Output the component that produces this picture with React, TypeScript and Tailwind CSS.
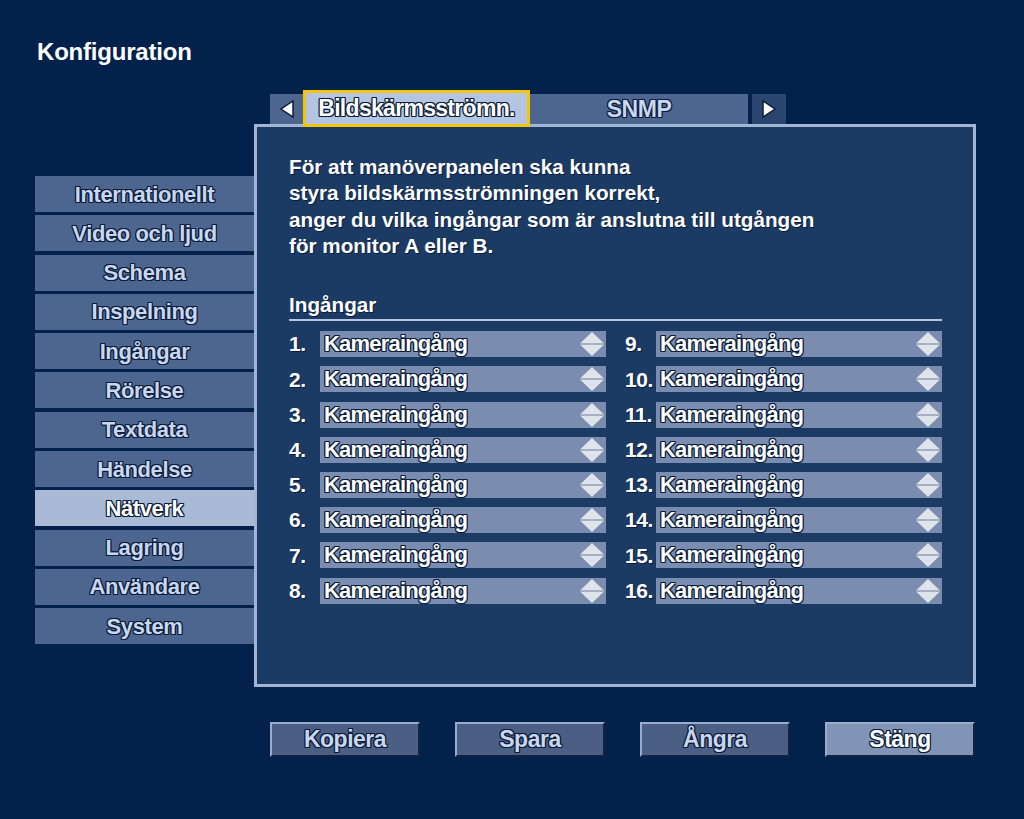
import React from "react";

const outline =
  "[text-shadow:-1px_-1px_0_#0b1b38,1px_-1px_0_#0b1b38,-1px_1px_0_#0b1b38,1px_1px_0_#0b1b38,0_-1px_0_#0b1b38,0_1px_0_#0b1b38,-1px_0_0_#0b1b38,1px_0_0_#0b1b38]";

const menu = [
  "Internationellt",
  "Video och ljud",
  "Schema",
  "Inspelning",
  "Ingångar",
  "Rörelse",
  "Textdata",
  "Händelse",
  "Nätverk",
  "Lagring",
  "Användare",
  "System",
];

const Diamond = () => (
  <svg width="26" height="26" viewBox="0 0 26 26" className="shrink-0">
    <polygon points="13,1 25,12.5 1,12.5" fill="#dfe3ea" />
    <polygon points="1,13.5 25,13.5 13,25" fill="#dfe3ea" />
    <line x1="1" y1="13" x2="25" y2="13" stroke="#9aa6ba" strokeWidth="1" />
  </svg>
);

const Row = ({ n }: { n: number }) => (
  <div className="flex items-center h-[26px]">
    <span className="w-[31px] text-[21px] font-bold text-white tracking-[-0.4px] [text-shadow:1px_1px_0_#0b1b38]">{n}.</span>
    <div className="flex-1 h-full bg-[#7a8db1] flex items-center justify-between pl-[4px] pr-[1px]">
      <span className={`text-[22px] font-bold text-white leading-none tracking-[-0.8px] ${outline}`}>Kameraingång</span>
      <Diamond />
    </div>
  </div>
);

const Arrow = ({ dir }: { dir: "l" | "r" }) => (
  <svg width="16" height="18" viewBox="0 0 16 18">
    {dir === "l" ? (
      <polygon points="14,1 14,17 2,9" fill="#ffffff" stroke="#0b1b38" strokeWidth="1.5" />
    ) : (
      <polygon points="2,1 2,17 14,9" fill="#ffffff" stroke="#0b1b38" strokeWidth="1.5" />
    )}
  </svg>
);

const BottomButton = ({ label, active }: { label: string; active?: boolean }) => (
  <button
    className={`w-[150px] h-[35px] border-2 border-t-[#9aabcb] border-l-[#9aabcb] border-b-[#13233f] border-r-[#13233f] flex items-center justify-center text-[23px] font-bold tracking-[-0.5px] ${outline} ${
      active ? "bg-[#8094b8] text-white" : "bg-[#4b5f85] text-[#c9d6ee]"
    }`}
  >
    {label}
  </button>
);

export default function App() {
  const rows = [1, 2, 3, 4, 5, 6, 7, 8];
  return (
    <div className="w-[1024px] h-[819px] bg-[#02214b] overflow-hidden font-['Liberation_Sans',Arial,sans-serif]">
      {/* Title */}
      <div className="h-[94px] pl-[37px] pt-[40px]">
        <h1 className="text-[24px] font-bold text-white leading-none tracking-[-0.2px]">Konfiguration</h1>
      </div>

      <div className="flex">
        {/* Sidebar */}
        <div className="ml-[35px] w-[219px] pt-[82px] flex flex-col gap-[3.3px]">
          {menu.map((m) => (
            <div
              key={m}
              className={`h-[36px] flex items-center justify-center text-[22px] font-bold tracking-[-0.4px] ${outline} ${
                m === "Nätverk" ? "bg-[#a9bad6] text-white" : "bg-[#4c668f] text-[#c8d6ee]"
              }`}
            >
              {m}
            </div>
          ))}
        </div>

        {/* Right column */}
        <div className="w-[722px]">
          <div className="h-[30px] flex items-center pl-[16px]">
            <div className="w-[33px] h-full bg-[#4c668f] flex items-center justify-center">
              <Arrow dir="l" />
            </div>
            <div
              className={`relative z-10 w-[227px] h-[37px] mt-[-1px] bg-[#b3c5e0] border-[3px] border-[#f6c600] flex items-center justify-center text-[23px] font-bold text-white tracking-[-0.7px] ${outline}`}
            >
              Bildskärmsströmn.
            </div>
            <div className={`w-[218px] h-full bg-[#4c668f] flex items-center justify-center text-[23px] font-bold text-[#c8d6ee] tracking-[-0.5px] ${outline}`}>
              SNMP
            </div>
            <div className="w-[34px] h-full ml-[4px] bg-[#2a4670] flex items-center justify-center">
              <Arrow dir="r" />
            </div>
          </div>

          <div className="h-[563px] bg-[#1b3a64] border-[3px] border-[#a3b5d4] pl-[32px] pr-[30px] pt-[27px]">
            <p className="text-[20.7px] font-bold text-white leading-[26.3px] [text-shadow:1px_1px_0_#0b1b38]">
              För att manöverpanelen ska kunna
              <br />
              styra bildskärmsströmningen korrekt,
              <br />
              anger du vilka ingångar som är anslutna till utgången
              <br />
              för monitor A eller B.
            </p>

            <div className="mt-[35px] w-[653px]">
              <div className="border-b-2 border-[#b7c6e0] pb-[0px]">
                <span className="text-[20.7px] font-bold text-white leading-[22px] [text-shadow:1px_1px_0_#0b1b38]">Ingångar</span>
              </div>
              <div className="mt-[10px] grid grid-cols-2 gap-x-[19px] gap-y-[9.2px]">
                {rows.map((r) => (
                  <React.Fragment key={r}>
                    <Row n={r} />
                    <Row n={r + 8} />
                  </React.Fragment>
                ))}
              </div>
            </div>
          </div>

          <div className="mt-[35px] pl-[16px] flex gap-[35px]">
            <BottomButton label="Kopiera" />
            <BottomButton label="Spara" />
            <BottomButton label="Ångra" />
            <BottomButton label="Stäng" active />
          </div>
        </div>
      </div>
    </div>
  );
}
